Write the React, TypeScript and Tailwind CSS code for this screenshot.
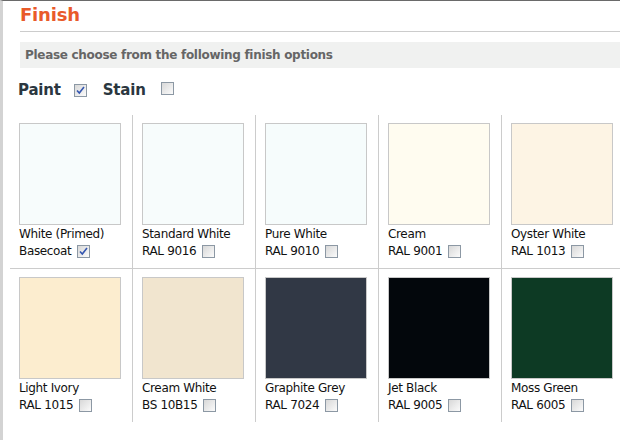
import React from "react";

type Finish = { name: string; code: string; color: string; checked?: boolean };

const finishes: Finish[] = [
  { name: "White (Primed)", code: "Basecoat", color: "#f7fcfc", checked: true },
  { name: "Standard White", code: "RAL 9016", color: "#f7fcfc" },
  { name: "Pure White", code: "RAL 9010", color: "#f6fcfc" },
  { name: "Cream", code: "RAL 9001", color: "#fffcf0" },
  { name: "Oyster White", code: "RAL 1013", color: "#fdf4e4" },
  { name: "Light Ivory", code: "RAL 1015", color: "#fcedcf" },
  { name: "Cream White", code: "BS 10B15", color: "#f1e5cf" },
  { name: "Graphite Grey", code: "RAL 7024", color: "#313845" },
  { name: "Jet Black", code: "RAL 9005", color: "#03070c" },
  { name: "Moss Green", code: "RAL 6005", color: "#0d3a24" },
];

// old-style windows checkbox
function Check({ checked }: { checked?: boolean }) {
  return (
    <span className="inline-flex w-[13px] h-[13px] border border-[#8c98a4] bg-gradient-to-br from-[#d8d8d8] to-[#fbfbfb] items-center justify-center shrink-0">
      {checked && (
        <svg width="9" height="9" viewBox="0 0 9 9">
          <path d="M1 4.5 L3.3 7 L8 1" fill="none" stroke="#3456b0" strokeWidth="1.6" />
        </svg>
      )}
    </span>
  );
}

export default function App() {
  return (
    <div className="min-h-[440px] bg-white border-l-[3px] border-l-[#d3d3d3] border-t border-t-[#6a6a6a] pl-[7px] font-['DejaVu_Sans',Verdana,sans-serif] overflow-hidden">
      {/* HEADER */}
      <div className="ml-[10px]">
        <h1 className="text-[18px] leading-[24px] font-bold text-[#e95a2a] pt-[2px] pb-[4px] border-b border-[#cccccc] tracking-[-0.2px]">
          Finish
        </h1>
        <div className="mt-[10px] h-[26px] bg-[#f0f1f0] flex items-center pl-[5px] text-[12px] font-bold text-[#666666] tracking-[-0.3px]">
          Please choose from the following finish options
        </div>
        <div className="flex items-center h-[44px] -ml-[2px] text-[15px] font-bold text-[#2b3740] tracking-[-0.2px]">
          <span>Paint</span>
          <span className="ml-[13px]"><Check checked /></span>
          <span className="ml-[16px]">Stain</span>
          <span className="ml-[15px]"><Check /></span>
        </div>
      </div>

      {/* SWATCHES */}
      <div className="grid grid-cols-[repeat(5,123px)] mt-[3px] w-[640px]">
        {finishes.map((f, i) => (
          <div
            key={f.name}
            className={`border-r border-[#cccccc] pt-[8px] pb-[8px] pl-[9px] ${i < 5 ? "border-b" : ""}`}
          >
            <div className="w-[102px] h-[102px] border border-[#c8c8c8]" style={{ background: f.color }} />
            <div className="pt-[1px] text-[12px] leading-[17px] text-[#111] tracking-[-0.35px]">{f.name}</div>
            <div className="flex items-center gap-[6px] text-[12px] leading-[17px] text-[#111] tracking-[-0.35px]">
              <span>{f.code}</span>
              <Check checked={f.checked} />
            </div>
          </div>
        ))}
      </div>
    </div>
  );
}
